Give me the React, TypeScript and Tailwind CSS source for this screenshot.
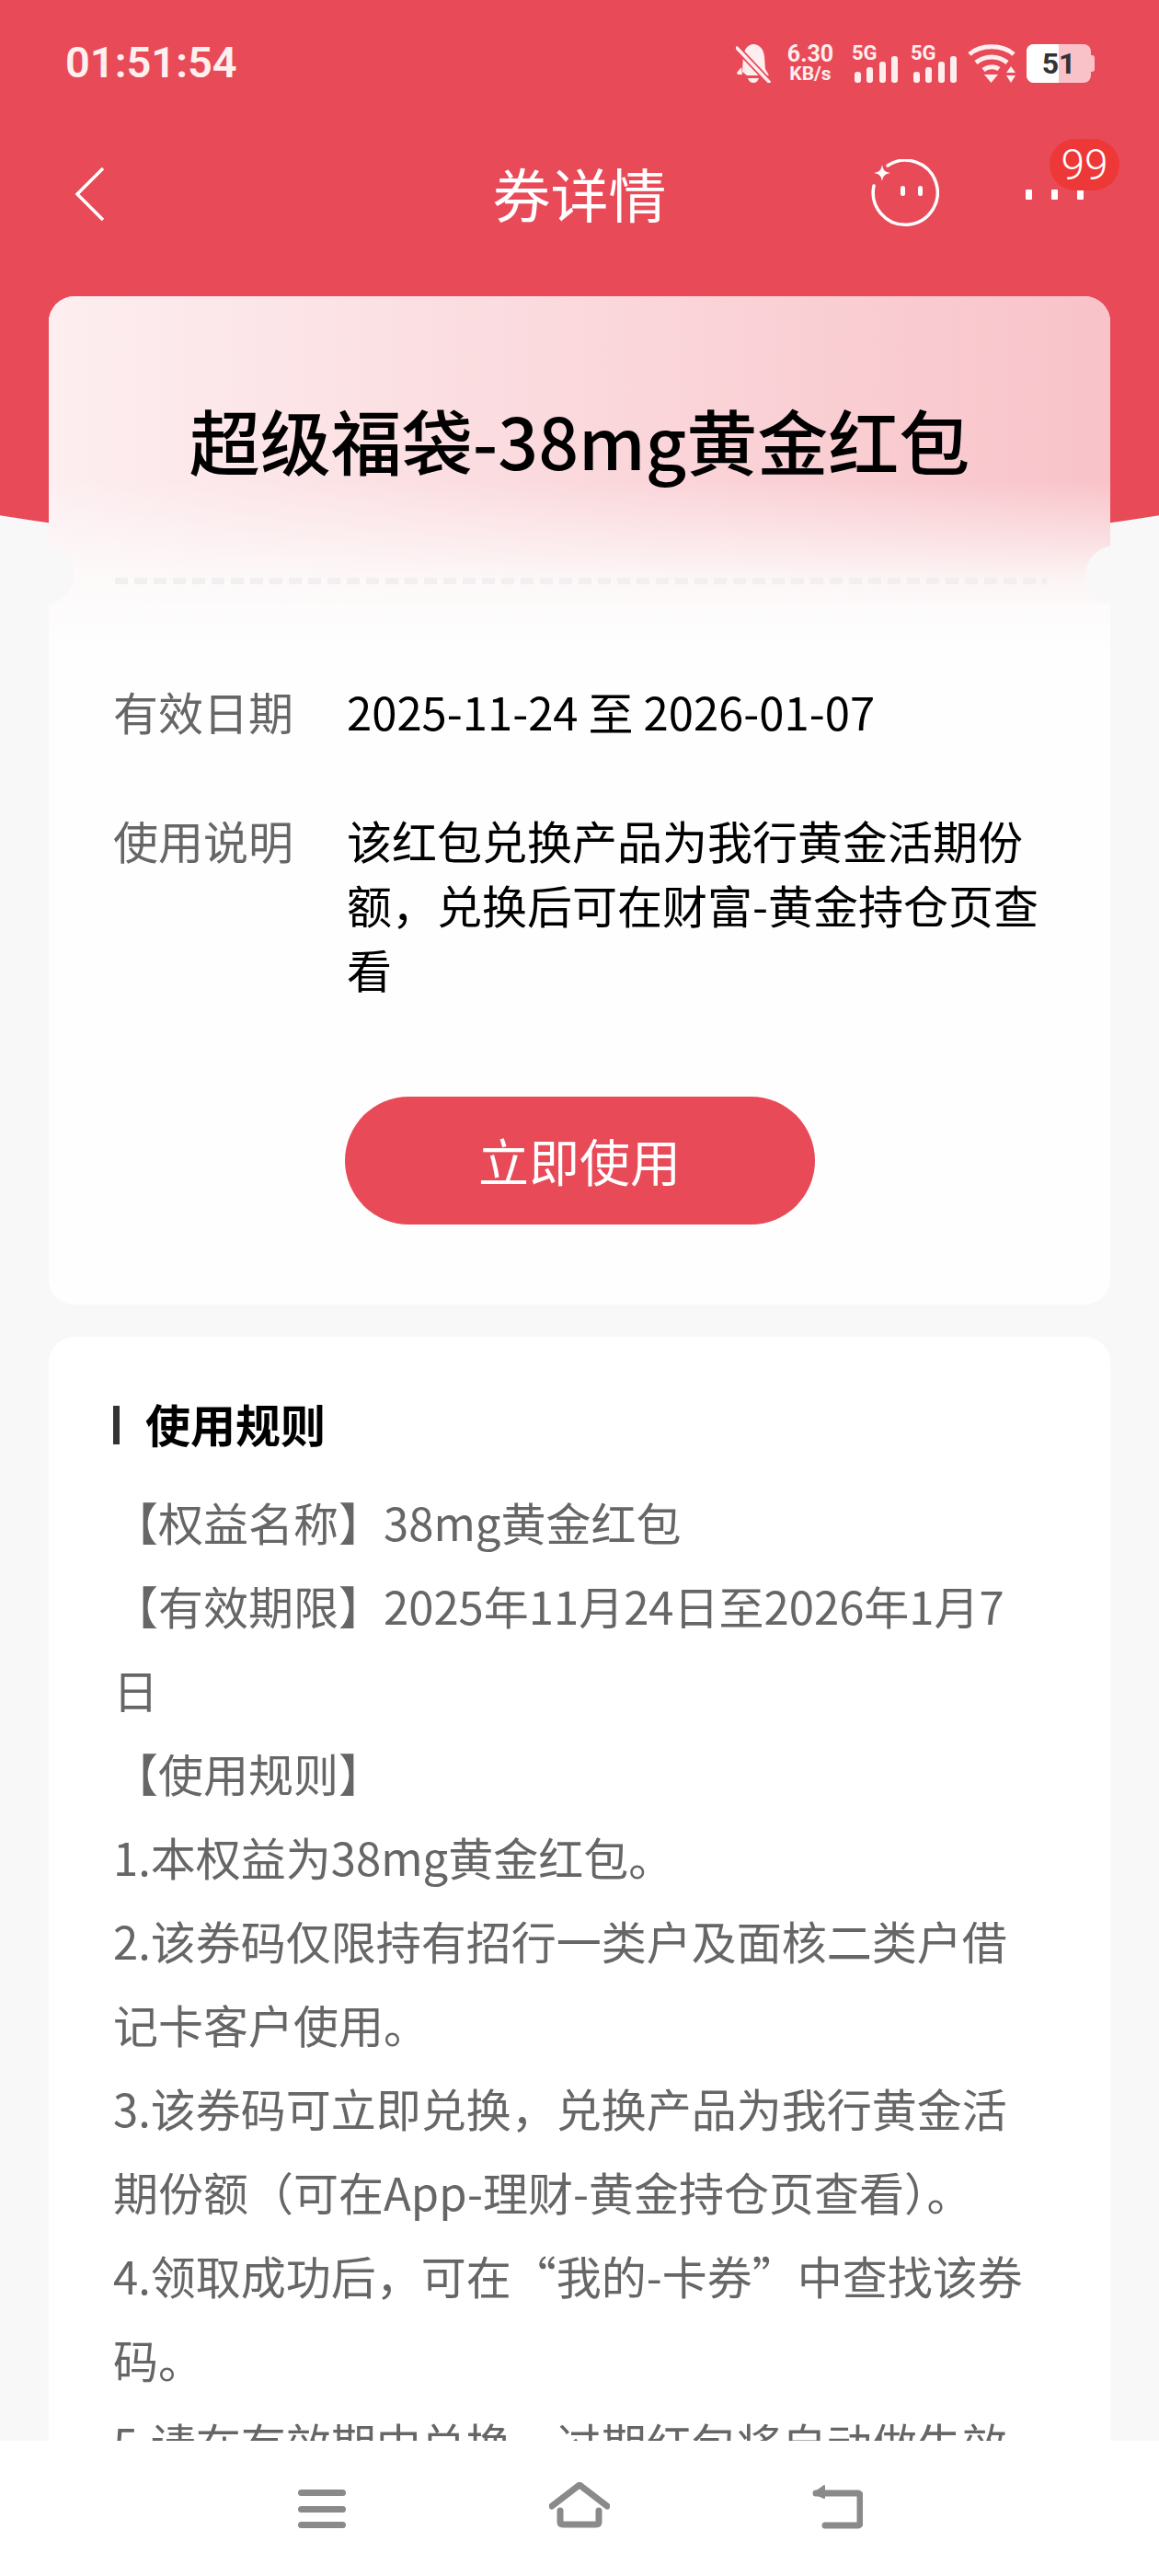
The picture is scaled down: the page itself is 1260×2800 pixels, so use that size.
import React from 'react';

const rules = [
  '【权益名称】38mg黄金红包',
  '【有效期限】2025年11月24日至2026年1月7日',
  '【使用规则】',
  '1.本权益为38mg黄金红包。',
  '2.该券码仅限持有招行一类户及面核二类户借记卡客户使用。',
  '3.该券码可立即兑换，兑换产品为我行黄金活期份额（可在App-理财-黄金持仓页查看）。',
  '4.领取成功后，可在“我的-卡券”中查找该券码。',
  '5.请在有效期中兑换，过期红包将自动做失效处理。',
];

const SignalIcon = () => (
  <div className="relative h-[42px] w-[50px]">
    <span className="absolute left-0 top-0 font-['Roboto',sans-serif] text-[22px] leading-[20px] font-bold text-[#ffeeee]">5G</span>
    <svg width="50" height="42" viewBox="0 0 50 42" className="absolute left-0 top-0" fill="#ffeeee">
      <rect x="3" y="30" width="7" height="12" rx="3" />
      <rect x="16" y="25" width="7" height="17" rx="3" />
      <rect x="30" y="19" width="7" height="23" rx="3" />
      <rect x="43" y="13" width="7" height="29" rx="3" />
    </svg>
  </div>
);

const App = () => {
  return (
    <div className="relative flex h-[2800px] w-[1260px] flex-col overflow-hidden bg-[#f8f8f8] font-['Noto_Sans_CJK_SC',sans-serif]">
      {/* red backdrop */}
      <div className="absolute left-[-370px] top-0 h-[605px] w-[2000px] bg-[#e84a58] [border-radius:0_0_1000px_1000px/0_0_200px_200px]" />

      <div className="relative flex min-h-0 flex-1 flex-col">
        {/* status bar */}
        <div className="flex h-[136px] shrink-0 items-start justify-between pl-[71px] pr-[70px] pt-[47px]">
          <span className="font-['Roboto',sans-serif] text-[47px] leading-[42px] font-semibold text-[#fff0f0]">01:51:54</span>
          <div className="flex items-center">
            <svg width="38" height="42" viewBox="0 0 38 42" fill="#ffeeee">
              <path d="M8 13C9 5 14 0 19 0c6 0 11 5 12 13l1 14 4 7H12L7 30z" />
              <path d="M13 37h12c-1 3-3 5-6 5s-5-2-6-5zM1 31l5-6 1 8H2z" />
              <path d="M1 4l35 37" stroke="#e84a58" strokeWidth="7" />
              <path d="M1 4l35 37" stroke="#ffeeee" strokeWidth="3.5" strokeLinecap="round" />
            </svg>
            <div className="ml-[16px] flex w-[54px] flex-col items-center font-['Roboto',sans-serif] font-bold text-[#ffeeee]">
              <span className="text-[25px] leading-[23px]">6.30</span>
              <span className="text-[21px] leading-[20px]">KB/s</span>
            </div>
            <div className="ml-[18px]"><SignalIcon /></div>
            <div className="ml-[14px]"><SignalIcon /></div>
            <svg width="52" height="42" viewBox="0 0 52 42" className="ml-[12px]" fill="none" stroke="#ffeeee" strokeWidth="5">
              <path d="M2 11C14 0 38 0 50 11" />
              <path d="M9 20c10-8 24-8 34 0" />
              <path d="M17 28c5-4 13-4 17-1" />
              <path d="M18 33h15l-7.500 9z" fill="#ffeeee" stroke="none" />
              <path d="M47 24l5 7H42zM47 42l5-8H42z" fill="#ffeeee" stroke="none" />
            </svg>
            <div className="ml-[12px] flex items-center">
              <div className="relative flex h-[42px] w-[70px] items-center justify-center overflow-hidden rounded-[8px] bg-[#f9c2c9]">
                <div className="absolute inset-y-0 left-0 w-[35px] bg-white" />
                <span className="relative font-['Roboto',sans-serif] text-[32px] leading-none font-bold text-[#333]">51</span>
              </div>
              <div className="h-[18px] w-[4px] rounded-r-[3px] bg-[#f9c2c9]" />
            </div>
          </div>
        </div>

        {/* nav bar */}
        <div className="relative flex h-[148px] shrink-0 items-center justify-center">
          <svg width="32" height="58" viewBox="0 0 32 58" className="absolute left-[82px] top-[46px]" fill="none" stroke="#fff" strokeWidth="3.5">
            <path d="M30 1L2 29l28 28" />
          </svg>
          <h1 className="-mt-[3px] text-[63px] leading-none font-normal text-white">券详情</h1>
          <svg width="76" height="76" viewBox="0 0 76 76" className="absolute left-[945px] top-[37px]" fill="none">
            <path d="M20 7a35 35 0 1 1-15 22" stroke="#fff" strokeWidth="3.5" strokeLinecap="round" />
            <path d="M14 6c1 6 3 8 9 9-6 1-8 3-9 9-1-6-3-8-9-9 6-1 8-3 9-9z" fill="#fff" />
            <rect x="34" y="29" width="5" height="11" rx="2.500" fill="#fff" />
            <rect x="53" y="29" width="5" height="11" rx="2.500" fill="#fff" />
          </svg>
          <div className="absolute left-[1115px] top-[70px] flex gap-[21px]">
            <span className="h-[11px] w-[7px] rounded-[1px] bg-white" />
            <span className="h-[11px] w-[7px] rounded-[1px] bg-white" />
            <span className="h-[11px] w-[7px] rounded-[1px] bg-white" />
          </div>
          <div className="absolute left-[1141px] top-[15px] flex h-[56px] w-[76px] items-center justify-center rounded-full bg-[#ee3838] font-['Roboto',sans-serif] text-[46px] leading-none font-light text-white">99</div>
        </div>

        {/* scroll content */}
        <div className="min-h-0 flex-1 overflow-hidden px-[53px] pt-[38px]">
          <div className="relative overflow-hidden rounded-[28px] bg-[#fefefe]">
            <div className="flex h-[335px] items-start justify-center bg-[linear-gradient(180deg,rgba(253,252,252,0)_60%,rgba(253,252,252,0.6)_83%,rgba(253,252,252,0.88)_93%,rgba(253,251,251,0.96)_100%),linear-gradient(90deg,#fdeef0,#f8c3c9)] pt-[101px]">
              <h2 className="text-[77px] leading-[110px] font-medium whitespace-nowrap text-black">超级福袋-38mg黄金红包</h2>
            </div>
            <div className="absolute left-[-6px] top-[271px] h-[64px] w-[33px] rounded-r-full bg-[#f8f8f8]" />
            <div className="absolute right-[-6px] top-[271px] h-[64px] w-[33px] rounded-l-full bg-[#f8f8f8]" />
            <div className="absolute left-[72px] right-[69px] top-[306px] h-[7px] bg-[repeating-linear-gradient(90deg,#f1efef_0,#f1efef_14px,transparent_14px,transparent_21px)]" />

            <div className="bg-[linear-gradient(180deg,#fdfbfb_0,#fefefe_50px)] px-[70px] pb-[87px] pt-[81px] text-[49px] leading-[70px]">
              <div className="flex">
                <span className="w-[254px] shrink-0 text-[#666]">有效日期</span>
                <span className="text-black">2025-11-24 至 2026-01-07</span>
              </div>
              <div className="mt-[70px] flex">
                <span className="w-[254px] shrink-0 text-[#666]">使用说明</span>
                <span className="text-black">该红包兑换产品为我行黄金活期份额，兑换后可在财富-黄金持仓页查看</span>
              </div>
              <div className="mt-[104px] flex justify-center">
                <button className="flex h-[139px] w-[511px] items-center justify-center rounded-full bg-[#e84a58] pb-[3px] text-[55px] text-white">立即使用</button>
              </div>
            </div>
          </div>

          <div className="mt-[35px] rounded-[28px] bg-white px-[70px] pt-[69px]">
            <div className="flex items-start gap-[28px]">
              <span className="mt-[6px] h-[42px] w-[7px] bg-[#333]" />
              <h3 className="text-[49px] leading-[50px] font-bold text-black">使用规则</h3>
            </div>
            <div className="mt-[36px] text-[49px] leading-[91px] text-[#666]">
              {rules.map((rule, idx) => (
                <p key={idx}>{rule}</p>
              ))}
            </div>
          </div>
        </div>
      </div>

      {/* bottom nav */}
      <div className="relative flex h-[147px] shrink-0 items-start bg-white">
        <svg width="52" height="42" viewBox="0 0 52 42" className="absolute left-[324px] top-[53px]" fill="#8a8a8a">
          <rect width="52" height="7" rx="3.500" />
          <rect y="18" width="52" height="7" rx="3.500" />
          <rect y="35" width="52" height="7" rx="3.500" />
        </svg>
        <svg width="66" height="50" viewBox="0 0 66 50" className="absolute left-[597px] top-[45px]" fill="none" stroke="#8a8a8a" strokeWidth="7" strokeLinecap="round" strokeLinejoin="round">
          <path d="M3 26L33 3l30 23" />
          <path d="M12 31v12c0 2 1 3 3 3h36c2 0 3-1 3-3V31" />
        </svg>
        <svg width="56" height="50" viewBox="0 0 56 50" className="absolute left-[882px] top-[46px]" fill="none" stroke="#8a8a8a" strokeWidth="7" strokeLinecap="round" strokeLinejoin="round">
          <path d="M5 11h46c1 0 2 1 2 2v31c0 1-1 2-2 2H15" />
          <path d="M14 3L3 11l11 5z" fill="#8a8a8a" strokeWidth="2" />
        </svg>
      </div>
    </div>
  );
};

export default App;
